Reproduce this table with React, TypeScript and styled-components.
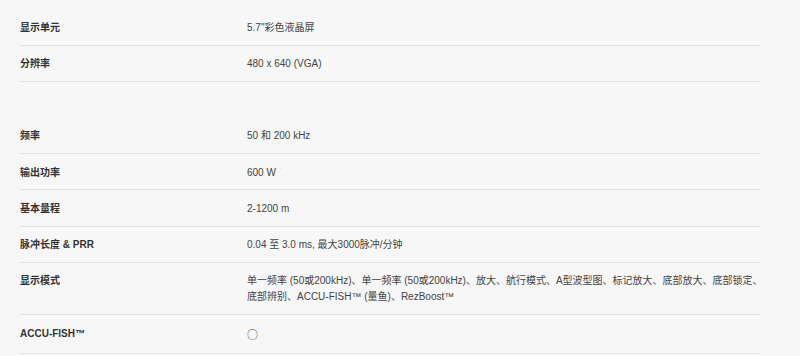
import { FunctionComponent } from "react";
import styled, { createGlobalStyle } from "styled-components";

const GlobalStyle = createGlobalStyle`
  html, body {
    margin: 0;
    padding: 0;
    background: #f7f7f7;
  }
  body {
    font-family: "Liberation Sans", Arial, "Noto Sans CJK SC", sans-serif;
  }
`;

const SpecsRoot = styled.div`
  width: 740px;
  margin-left: 20px;
  padding-top: 9.5px;
  font-size: 10px;
  line-height: 16px;
  color: #444;
`;

// value column runs a touch past the rule so the long row wraps like the site
const SpecRow = styled.div`
  display: grid;
  grid-template-columns: 227px 519px;
  padding: 10.5px 0 8.8px;
  border-bottom: 1px solid #e2e2e2;
`;

const Spacer = styled.div`
  height: 35.7px;
`;

const Label = styled.div`
  font-weight: 700;
  color: #333;
`;

const Value = styled.div`
  color: #444;
`;

const Mark = styled.span`
  font-family: "Noto Sans CJK SC", sans-serif;
  font-size: 11px;
  color: #444;
`;

type Spec = { label: string; value: React.ReactNode };

const topSpecs: Spec[] = [
  { label: "显示单元", value: "5.7\"彩色液晶屏" },
  { label: "分辨率", value: "480 x 640 (VGA)" },
];

const sonarSpecs: Spec[] = [
  { label: "频率", value: "50 和 200 kHz" },
  { label: "输出功率", value: "600 W" },
  { label: "基本量程", value: "2-1200 m" },
  { label: "脉冲长度 & PRR", value: "0.04 至 3.0 ms, 最大3000脉冲/分钟" },
  {
    label: "显示模式",
    value:
      "单一频率 (50或200kHz)、单一频率 (50或200kHz)、放大、航行模式、A型波型图、标记放大、底部放大、底部锁定、底部辨别、ACCU-FISH™ (量鱼)、RezBoost™",
  },
  { label: "ACCU-FISH™", value: <Mark>○</Mark> },
];

const App: FunctionComponent = () => {
  return (
    <>
      <GlobalStyle />
      <SpecsRoot>
        {topSpecs.map((s) => (
          <SpecRow key={s.label}>
            <Label>{s.label}</Label>
            <Value>{s.value}</Value>
          </SpecRow>
        ))}
        <Spacer />
        {sonarSpecs.map((s) => (
          <SpecRow key={s.label}>
            <Label>{s.label}</Label>
            <Value>{s.value}</Value>
          </SpecRow>
        ))}
      </SpecsRoot>
    </>
  );
};

export default App;
